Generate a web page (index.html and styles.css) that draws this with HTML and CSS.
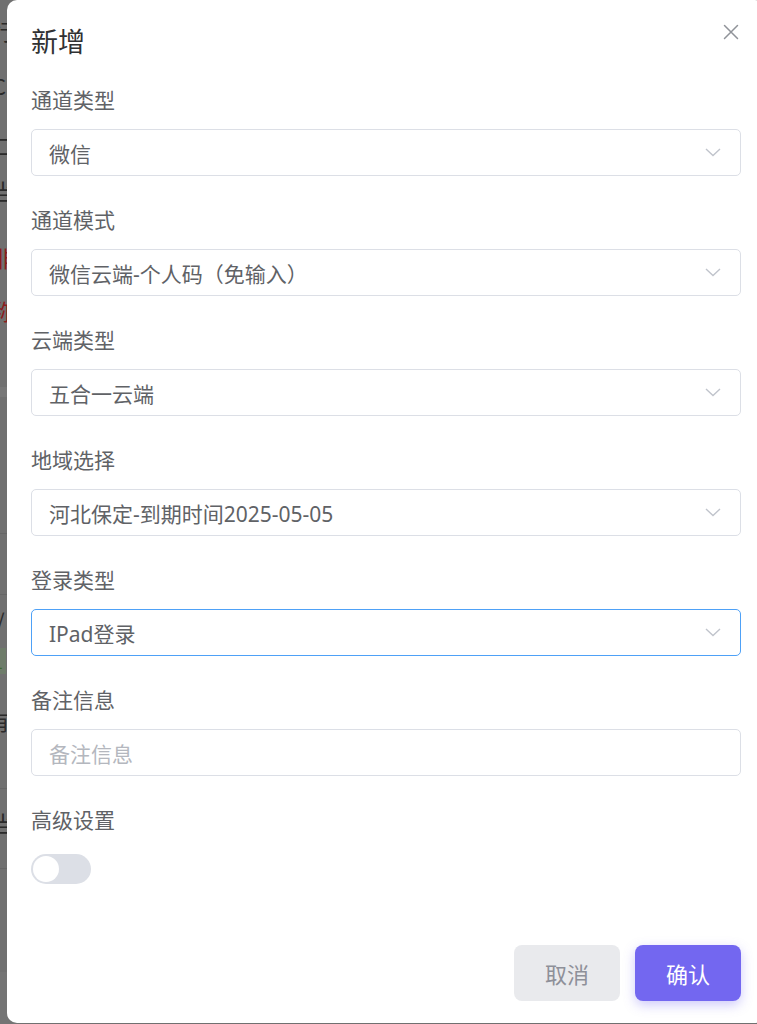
FILE: index.html
```html
<!DOCTYPE html>
<html lang="zh-CN">
<head>
<meta charset="utf-8">
<title>新增</title>
<link rel="stylesheet" href="styles.css">
</head>
<body>
<div class="backdrop">
  <div class="bg-row r1">行</div>
  <div class="bg-row r2">C</div>
  <div class="bg-row r3">口</div>
  <div class="bg-row r4">当</div>
  <div class="bg-row r5 red">非</div>
  <div class="bg-row r6 red">称</div>
  <div class="bg-band"></div>
  <div class="bg-line l1"></div>
  <div class="bg-line l2"></div>
  <div class="bg-row r7">/</div>
  <div class="bg-row r8 green">1</div>
  <div class="bg-row r9">有</div>
  <div class="bg-line l3"></div>
  <div class="bg-row r10">当</div>
  <div class="bg-line l4"></div>
  <div class="bg-foot"></div>
</div>

<div class="modal">
  <button class="close" aria-label="关闭">
    <svg width="16" height="16" viewBox="0 0 16 16"><path d="M1.5 1.5 L14.5 14.5 M14.5 1.5 L1.5 14.5" stroke="#909399" stroke-width="1.5" fill="none" stroke-linecap="round"/></svg>
  </button>
  <div class="title">新增</div>

  <div class="form">
    <div class="field">
      <div class="label">通道类型</div>
      <div class="select"><span class="value">微信</span><svg class="chev" width="16" height="9" viewBox="0 0 16 9"><path d="M1 1 L8 7.5 L15 1" stroke="#c0c4cc" stroke-width="1.4" fill="none"/></svg></div>
    </div>
    <div class="field">
      <div class="label">通道模式</div>
      <div class="select"><span class="value">微信云端-个人码（免输入）</span><svg class="chev" width="16" height="9" viewBox="0 0 16 9"><path d="M1 1 L8 7.5 L15 1" stroke="#c0c4cc" stroke-width="1.4" fill="none"/></svg></div>
    </div>
    <div class="field">
      <div class="label">云端类型</div>
      <div class="select"><span class="value">五合一云端</span><svg class="chev" width="16" height="9" viewBox="0 0 16 9"><path d="M1 1 L8 7.5 L15 1" stroke="#c0c4cc" stroke-width="1.4" fill="none"/></svg></div>
    </div>
    <div class="field">
      <div class="label">地域选择</div>
      <div class="select"><span class="value">河北保定-到期时间2025-05-05</span><svg class="chev" width="16" height="9" viewBox="0 0 16 9"><path d="M1 1 L8 7.5 L15 1" stroke="#c0c4cc" stroke-width="1.4" fill="none"/></svg></div>
    </div>
    <div class="field">
      <div class="label">登录类型</div>
      <div class="select focused"><span class="value">IPad登录</span><svg class="chev" width="16" height="9" viewBox="0 0 16 9"><path d="M1 1 L8 7.5 L15 1" stroke="#c0c4cc" stroke-width="1.4" fill="none"/></svg></div>
    </div>
    <div class="field">
      <div class="label">备注信息</div>
      <div class="select"><span class="placeholder">备注信息</span></div>
    </div>
    <div class="field last">
      <div class="label">高级设置</div>
      <div class="switch-wrap"><span class="switch"><span class="knob"></span></span></div>
    </div>
  </div>

  <div class="footer">
    <button class="btn cancel">取消</button>
    <button class="btn confirm">确认</button>
  </div>
</div>
</body>
</html>
```
FILE: styles.css
```css
* { box-sizing: border-box; }
html, body {
  margin: 0;
  width: 757px;
  height: 1024px;
  overflow: hidden;
}
body {
  background: #707070;
  font-family: "Noto Sans", "Noto Sans CJK SC", sans-serif;
  position: relative;
}

/* page behind the overlay */
.backdrop {
  width: 757px;
  height: 1024px;
  position: relative;
  color: #2a2a2a;
  font-family: "Noto Sans CJK SC", sans-serif;
  font-size: 22px;
}
.bg-row {
  position: absolute;
  left: -8px;
  line-height: 26px;
}
.bg-row.red { color: #8b1c1c; }
.bg-row.green { color: #3f6a2c; background: #6e7c6a; padding: 0 3px; font-size: 18px; }
.r1 { top: 17px; }
.r2 { top: 72px; }
.r3 { top: 132px; }
.r4 { top: 177px; }
.r5 { top: 244px; }
.r6 { top: 297px; }
.r7 { top: 607px; left: -4px; }
.r8 { top: 648px; left: -10px; }
.r9 { top: 707px; left: -12px; }
.r10 { top: 809px; }
.bg-band { position: absolute; left: 0; top: 387px; width: 20px; height: 10px; background: #777; }
.bg-line { position: absolute; left: 0; width: 20px; height: 1px; background: #666; }
.l1 { top: 533px; }
.l2 { top: 594px; }
.l3 { top: 788px; }
.l4 { top: 868px; }
.bg-foot { position: absolute; left: 0; top: 972px; width: 20px; height: 52px; background: #747474; }

/* dialog */
.modal {
  position: absolute;
  left: 7px;
  top: 0;
  width: 758px;
  height: 1023px;
  background: #fff;
  border-radius: 10px;
  padding: 24px 24px 22px;
  display: flex;
  flex-direction: column;
}
.close {
  position: absolute;
  top: 24px;
  right: 26px;
  border: 0;
  background: none;
  padding: 0;
  width: 16px;
  height: 16px;
  display: flex;
}
.title {
  font-size: 27px;
  line-height: 36px;
  color: #303133;
  margin-bottom: 26px;
}
.field { margin-bottom: 30px; }
.field.last { margin-bottom: 0; }
.label {
  font-size: 21px;
  line-height: 28px;
  color: #606266;
  margin-bottom: 15px;
}
.select {
  height: 47px;
  border: 1px solid #dcdfe6;
  border-radius: 5px;
  display: flex;
  align-items: center;
  justify-content: space-between;
  padding: 0 19px 0 17px;
  font-size: 21px;
  color: #606266;
}
.select.focused { border-color: #4ea1f7; }
.placeholder { color: #b4b7be; }
.chev { display: block; }
.switch-wrap {
  height: 40px;
  display: flex;
  align-items: center;
  margin-top: 1px;
}
.switch {
  width: 60px;
  height: 30px;
  border-radius: 15px;
  background: #dcdfe6;
  padding: 2px;
  display: flex;
}
.knob {
  width: 26px;
  height: 26px;
  border-radius: 50%;
  background: #fff;
}
.footer {
  margin-top: auto;
  display: flex;
  justify-content: flex-end;
  gap: 15px;
}
.btn {
  width: 106px;
  height: 56px;
  border: 0;
  border-radius: 8px;
  font-family: "Noto Sans CJK SC", "Noto Sans", sans-serif;
  font-size: 22px;
  padding: 0;
}
.cancel { background: #e9eaed; color: #8e9099; }
.confirm {
  background: #7367f0;
  color: #fff;
  box-shadow: 0 4px 12px rgba(115, 103, 240, 0.35);
}
```
